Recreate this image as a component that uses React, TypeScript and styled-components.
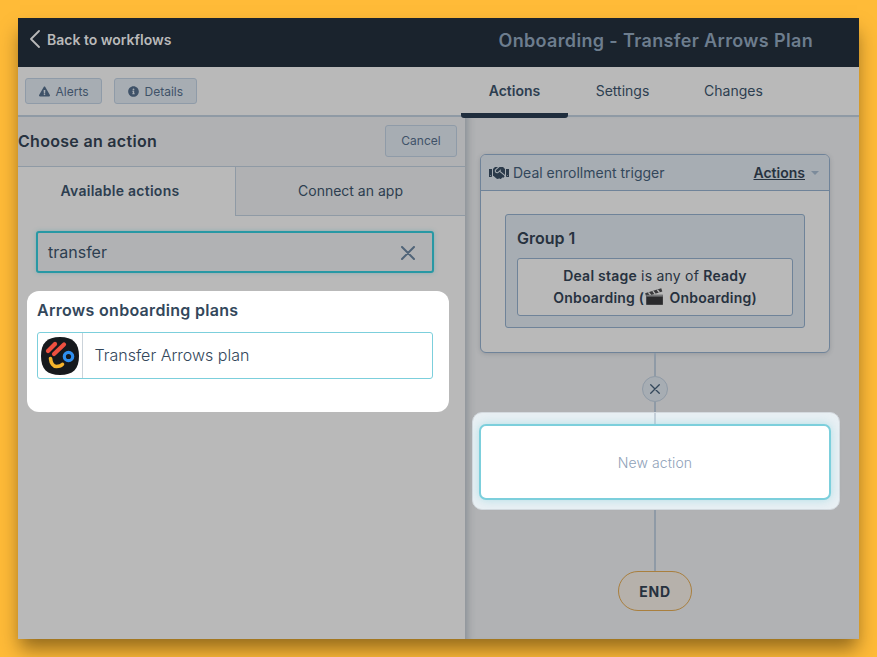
import React from "react";
import styled, { createGlobalStyle } from "styled-components";
import { FaExclamationTriangle, FaHandshake, FaInfoCircle } from "react-icons/fa";

const GlobalStyle = createGlobalStyle`
  html, body {
    margin: 0;
    padding: 0;
    height: 100%;
    background: #ffbb38;
    font-family: "Inter", "Liberation Sans", sans-serif;
    color: #27323f;
  }
  * { box-sizing: border-box; }
`;

const Page = styled.div`
  width: 877px;
  height: 657px;
  padding: 18px;
  overflow: hidden;
`;

const Window = styled.div`
  width: 841px;
  height: 621px;
  display: flex;
  flex-direction: column;
  background: #b9b9b9;
  box-shadow: 0 12px 18px -2px rgba(40, 25, 0, 0.5);
`;

const Header = styled.header`
  height: 49px;
  flex: none;
  display: flex;
  align-items: center;
  justify-content: space-between;
  background: #1a232d;
  padding: 0 46px 7px 11px;
`;

const BackLink = styled.div`
  display: flex;
  align-items: center;
  gap: 7px;
  color: #b9b9b9;
  font-size: 14px;
  font-weight: 600;
`;

const Title = styled.div`
  color: #6d7d8e;
  font-size: 18px;
  font-weight: 600;
  letter-spacing: 0.35px;
  padding-top: 3px;
`;

const SubBar = styled.div`
  height: 50px;
  flex: none;
  display: flex;
  border-bottom: 2px solid #8f9aa5;
`;

const SubLeft = styled.div`
  width: 443px;
  display: flex;
  align-items: flex-start;
  gap: 12px;
  padding: 11px 0 0 7px;
`;

const PillButton = styled.div`
  height: 26px;
  display: flex;
  align-items: center;
  gap: 6px;
  padding: 0 12.5px;
  background: #a7adb3;
  border: 1px solid #8f9ba8;
  border-radius: 3px;
  color: #3f5268;
  font-size: 12px;
`;

const TabNav = styled.nav`
  display: flex;
`;

const NavTab = styled.div<{ $active?: boolean; $width: number }>`
  position: relative;
  z-index: 1;
  width: ${(p) => p.$width}px;
  height: ${(p) => (p.$active ? "51px" : "50px")};
  display: flex;
  align-items: center;
  justify-content: center;
  padding-bottom: ${(p) => (p.$active ? "0" : "4px")};
  font-size: 14px;
  font-weight: ${(p) => (p.$active ? 600 : 400)};
  color: #2d3e50;
  border-bottom: ${(p) => (p.$active ? "5px solid #1f2d3d" : "none")};
  border-radius: 0 0 3px 3px;
`;

const Body = styled.div`
  flex: 1;
  display: flex;
  min-height: 0;
`;

const LeftPane = styled.aside`
  width: 447px;
  flex: none;
  display: flex;
  flex-direction: column;
`;

const PaneHead = styled.div`
  height: 50px;
  flex: none;
  display: flex;
  align-items: center;
  justify-content: space-between;
  padding: 0 8px 0 0;
  background: #b0b1b3;
  border-bottom: 1px solid #8f9aa5;
`;

const PaneTitle = styled.h2`
  margin: 0 0 2px;
  font-size: 16px;
  font-weight: 600;
  letter-spacing: 0.3px;
  color: #27323f;
`;

const CancelButton = styled.div`
  width: 72px;
  height: 32px;
  margin-top: -2px;
  display: flex;
  align-items: center;
  justify-content: center;
  background: #a7adb3;
  border: 1px solid #8f9ba8;
  border-radius: 3px;
  color: #3f5268;
  font-size: 12px;
`;

const PaneTabs = styled.div`
  height: 49px;
  flex: none;
  display: flex;
`;

const PaneTab = styled.div<{ $active?: boolean }>`
  flex: ${(p) => (p.$active ? "0 0 217px" : "1")};
  display: flex;
  align-items: center;
  justify-content: center;
  padding: 0 ${(p) => (p.$active ? "13px" : "0")} 2px 0;
  font-size: 14px;
  letter-spacing: ${(p) => (p.$active ? "0.25px" : "0")};
  font-weight: ${(p) => (p.$active ? 600 : 400)};
  color: #2d3e50;
  background: ${(p) => (p.$active ? "transparent" : "#b0b1b3")};
  border-left: ${(p) => (p.$active ? "none" : "1px solid #8f9aa5")};
  border-bottom: ${(p) => (p.$active ? "none" : "1px solid #8f9aa5")};
`;

const PaneContent = styled.div`
  padding: 15px 0 0 9px;
`;

const SearchBox = styled.div`
  width: 398px;
  height: 42px;
  margin-left: 9px;
  display: flex;
  align-items: center;
  justify-content: space-between;
  padding: 0 17px 0 10px;
  background: #b1b2b4;
  border: 2px solid #2898a4;
  border-radius: 3px;
  box-shadow: 0 0 4px rgba(40, 152, 164, 0.35);
  font-size: 16px;
  color: #2d3e50;

  svg {
    margin-top: 2px;
  }
`;

const ResultCard = styled.div`
  width: 422px;
  height: 121px;
  margin-top: 18px;
  padding: 9px 16px 0 10px;
  background: #fff;
  border-radius: 12px;
`;

const ResultHeading = styled.h3`
  margin: 0;
  font-size: 16px;
  line-height: 20px;
  font-weight: 600;
  letter-spacing: 0.3px;
  color: #33475b;
`;

const ResultRow = styled.div`
  height: 47px;
  margin-top: 12px;
  display: flex;
  align-items: center;
  border: 1px solid #7ccfdc;
  border-radius: 3px;
`;

const LogoCell = styled.div`
  width: 45px;
  height: 100%;
  flex: none;
  display: flex;
  align-items: center;
  justify-content: center;
  border-right: 1px solid #cbd3da;
`;

const ResultLabel = styled.span`
  padding: 0 0 2px 11.5px;
  font-size: 16px;
  font-weight: 300;
  color: #33475b;
`;

const Canvas = styled.main`
  flex: 1;
  display: flex;
  flex-direction: column;
  align-items: center;
  padding: 37px 14px 0 0;
  background: #b1b2b4;
  box-shadow: inset 9px 0 7px -6px rgba(80, 92, 105, 0.38);
`;

const TriggerCard = styled.section`
  width: 350px;
  height: 199px;
  flex: none;
  background: #b9b9b9;
  border: 1px solid #6f8399;
  border-radius: 6px;
  overflow: hidden;
  box-shadow: 0 1px 4px rgba(70, 80, 90, 0.25);
`;

const TriggerHead = styled.div`
  height: 36px;
  display: flex;
  align-items: center;
  justify-content: space-between;
  padding: 0 10px 0 8px;
  background: #a7adb3;
  border-bottom: 1px solid #6f8399;
  font-size: 14px;
  color: #33475b;
`;

const TriggerName = styled.div`
  display: flex;
  align-items: center;
  gap: 4px;
`;

const ActionsMenu = styled.div`
  display: flex;
  align-items: center;
  gap: 6px;
  font-weight: 600;
  color: #27323f;
  text-decoration: underline;

  &::after {
    content: "";
    border-left: 4px solid transparent;
    border-right: 4px solid transparent;
    border-top: 4px solid #7c8b9b;
  }
`;

const GroupBox = styled.div`
  width: 300px;
  height: 114px;
  margin: 23px 0 0 24px;
  padding: 11px 11px 0;
  background: #a7adb3;
  border: 1px solid #6f8399;
  border-radius: 3px;
`;

const GroupTitle = styled.div`
  font-size: 16px;
  line-height: 24px;
  font-weight: 600;
  color: #27323f;
`;

const Condition = styled.div`
  height: 58px;
  margin-top: 8px;
  padding: 6px 10px 0;
  background: #b9b9b9;
  border: 1px solid #6f8399;
  border-radius: 3px;
  text-align: center;
  font-size: 14px;
  line-height: 22px;
  letter-spacing: 0.22px;
  color: #27323f;

  b {
    font-weight: 600;
  }

  svg {
    margin: 0 1px 0 0;
    vertical-align: -3px;
  }
`;

const Connector = styled.div<{ $height: number; $light?: boolean }>`
  width: 2px;
  height: ${(p) => p.$height}px;
  flex: none;
  background: ${(p) => (p.$light ? "#c6d0da" : "#8f9aa6")};
`;

const CloseCircle = styled.div`
  width: 26px;
  height: 26px;
  flex: none;
  display: flex;
  align-items: center;
  justify-content: center;
  background: #a7adb3;
  border: 1px solid #8f9aa6;
  border-radius: 50%;
`;

const Highlight = styled.div`
  width: 368px;
  height: 98px;
  flex: none;
  margin-left: 2px;
  padding-right: 2px;
  display: flex;
  flex-direction: column;
  align-items: center;
  background: #e9f0f4;
  border: 1px solid #d4dadf;
  border-radius: 10px;
`;

const NewAction = styled.div`
  width: 352px;
  height: 76px;
  flex: none;
  display: flex;
  align-items: center;
  justify-content: center;
  background: #fff;
  border: 2px solid #7ccfdc;
  border-radius: 7px;
  box-shadow: 0 0 10px rgba(124, 207, 220, 0.5);
  color: #8fa1b8;
  font-size: 14px;
  font-weight: 300;
  letter-spacing: 0.1px;
`;

const EndPill = styled.div`
  width: 74px;
  height: 40px;
  flex: none;
  display: flex;
  align-items: center;
  justify-content: center;
  background: #b6b1ab;
  border: 1px solid #a97f3e;
  border-radius: 20px;
  font-size: 14px;
  font-weight: 700;
  letter-spacing: 0.8px;
  color: #27323f;
`;

const Cross = ({ size, width, color }: { size: number; width: number; color: string }) => (
  <svg width={size} height={size} viewBox="0 0 14 14" fill="none">
    <path d="M1 1l12 12M13 1L1 13" stroke={color} strokeWidth={width} strokeLinecap="round" />
  </svg>
);

const ArrowsLogo = () => (
  <svg width="38" height="38" viewBox="0 0 38 38" fill="none">
    <path d="M19 0C32 0 38 6 38 19S32 38 19 38 0 32 0 19 6 0 19 0Z" fill="#16191d" />
    <g strokeLinecap="round" strokeWidth="4.2" fill="none">
      <path d="M7 14L14 7" stroke="#ef5040" />
      <path d="M13 17L23 7.5" stroke="#ef5040" />
      <path d="M9.5 21.5c.5 5 3 8 6 8s5-.8 6-2.2" stroke="#f6b42c" strokeWidth="3.6" />
    </g>
    <circle cx="27.5" cy="19.5" r="4.2" fill="#16191d" stroke="#2f8ff0" strokeWidth="3.2" />
  </svg>
);

const Clapper = () => (
  <svg width="20" height="19" viewBox="0 0 18 17">
    <path d="M2 7h15v9H2z" fill="#2a2a2c" />
    <path d="M1 5.5L15.5 1l1 3L2 8.5z" fill="#3a3a3c" />
    <path d="M4 4.8l2 2.6M8 3.6l2 2.6M12 2.4l2 2.6" stroke="#b9b9b9" strokeWidth="1.2" />
    <path d="M2 7h15v1.6H2z" fill="#77787a" />
  </svg>
);

export default function App() {
  return (
    <Page>
      <GlobalStyle />
      <Window>
        <Header>
          <BackLink>
            <svg width="11" height="18" viewBox="0 0 11 18" fill="none">
              <path d="M10 1L2 9l8 8" stroke="#b9b9b9" strokeWidth="1.8" strokeLinecap="round" strokeLinejoin="round" />
            </svg>
            Back to workflows
          </BackLink>
          <Title>Onboarding - Transfer Arrows Plan</Title>
        </Header>
        <SubBar>
          <SubLeft>
            <PillButton>
              <FaExclamationTriangle size={11} color="#3f5268" />
              Alerts
            </PillButton>
            <PillButton>
              <FaInfoCircle size={11} color="#3f5268" />
              Details
            </PillButton>
          </SubLeft>
          <TabNav>
            <NavTab $active $width={107}>Actions</NavTab>
            <NavTab $width={109}>Settings</NavTab>
            <NavTab $width={113}>Changes</NavTab>
          </TabNav>
        </SubBar>
        <Body>
          <LeftPane>
            <PaneHead>
              <PaneTitle>Choose an action</PaneTitle>
              <CancelButton>Cancel</CancelButton>
            </PaneHead>
            <PaneTabs>
              <PaneTab $active>Available actions</PaneTab>
              <PaneTab>Connect an app</PaneTab>
            </PaneTabs>
            <PaneContent>
              <SearchBox>
                transfer
                <Cross size={14} width={2} color="#506478" />
              </SearchBox>
              <ResultCard>
                <ResultHeading>Arrows onboarding plans</ResultHeading>
                <ResultRow>
                  <LogoCell>
                    <ArrowsLogo />
                  </LogoCell>
                  <ResultLabel>Transfer Arrows plan</ResultLabel>
                </ResultRow>
              </ResultCard>
            </PaneContent>
          </LeftPane>
          <Canvas>
            <TriggerCard>
              <TriggerHead>
                <TriggerName>
                  <FaHandshake size={20} color="#2b3a4a" />
                  Deal enrollment trigger
                </TriggerName>
                <ActionsMenu>Actions</ActionsMenu>
              </TriggerHead>
              <GroupBox>
                <GroupTitle>Group 1</GroupTitle>
                <Condition>
                  <b>Deal stage</b> is any of <b>Ready</b> <b>Onboarding (</b>
                  <Clapper /> <b>Onboarding)</b>
                </Condition>
              </GroupBox>
            </TriggerCard>
            <Connector $height={23} />
            <CloseCircle>
              <Cross size={10} width={1.8} color="#33475b" />
            </CloseCircle>
            <Connector $height={10} />
            <Highlight>
              <Connector $height={11} $light />
              <NewAction>New action</NewAction>
            </Highlight>
            <Connector $height={61} />
            <EndPill>END</EndPill>
          </Canvas>
        </Body>
      </Window>
    </Page>
  );
}
